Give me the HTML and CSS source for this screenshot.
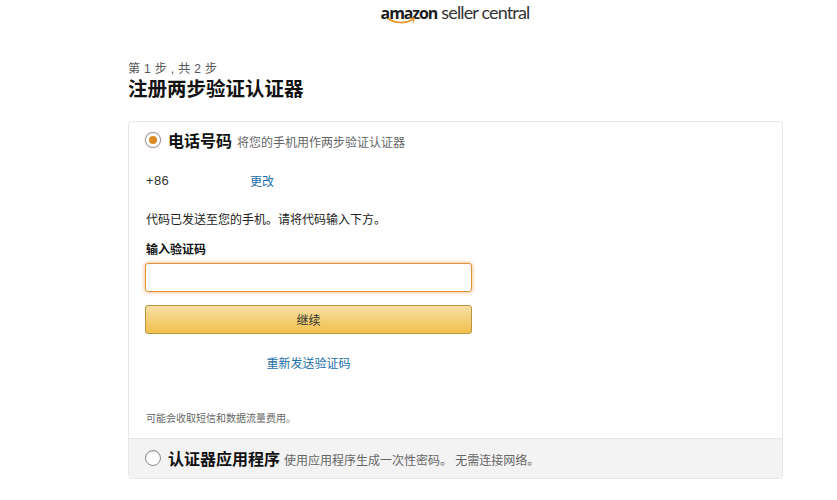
FILE: index.html
```html
<!DOCTYPE html>
<html lang="zh-CN">
<head>
<meta charset="utf-8">
<title>注册两步验证认证器</title>
<link rel="stylesheet" href="styles.css">
</head>
<body>
<header class="brand">
  <div class="logo">
    <span class="logo-amazon">amazon</span><span class="logo-seller">seller central</span>
    <svg class="smile" width="30" height="9" viewBox="0 0 30 9" aria-hidden="true">
      <path d="M1 1.5C8 6.5 18 7 26 2.5" fill="none" stroke="#e8962a" stroke-width="1.6"/>
      <path d="M23 1.2L27.5 1.4L26 5.5" fill="none" stroke="#e8962a" stroke-width="1.2"/>
    </svg>
  </div>
</header>
<main class="page">
  <p class="step">第 1 步 , 共 2 步</p>
  <h1 class="title">注册两步验证认证器</h1>
  <div class="card">
    <section class="panel">
      <div class="option">
        <span class="radio radio-on"></span>
        <span class="option-name">电话号码</span>
        <span class="option-desc">将您的手机用作两步验证认证器</span>
      </div>
      <div class="phone-row">
        <span class="phone">+86</span>
        <a class="link" href="#">更改</a>
      </div>
      <p class="notice">代码已发送至您的手机。请将代码输入下方。</p>
      <label class="label" for="code">输入验证码</label>
      <input class="input" id="code" type="text">
      <button class="button" type="button">继续</button>
      <div class="resend"><a class="link" href="#">重新发送验证码</a></div>
      <p class="fine">可能会收取短信和数据流量费用。</p>
    </section>
    <section class="panel-alt">
      <div class="option">
        <span class="radio"></span>
        <span class="option-name">认证器应用程序</span>
        <span class="option-desc">使用应用程序生成一次性密码。 无需连接网络。</span>
      </div>
    </section>
  </div>
</main>
</body>
</html>
```
FILE: styles.css
```css
* { box-sizing: border-box; }
html, body { margin: 0; padding: 0; background: #fff; }
body {
  height: 500px;
  overflow: hidden;
  font-family: "Liberation Sans", "Noto Sans CJK SC", sans-serif;
  color: #111;
  font-size: 12px;
}
.brand { height: 59px; display: flex; justify-content: center; padding-left: 73px; }
.logo { position: relative; height: 26px; display: flex; align-items: baseline; white-space: nowrap; }
.logo-amazon { font-family: "Open Sans", sans-serif; font-weight: 700; font-size: 16px; letter-spacing: -1.1px; color: #1a1a1a; line-height: 24px; }
.logo-seller { font-family: "Lato", sans-serif; font-size: 18px; letter-spacing: -0.85px; color: #333; margin-left: 4px; line-height: 24px; }
.smile { position: absolute; left: 6px; top: 17px; }
.page { width: 655px; margin-left: 128px; }
.step { margin: 0; font-size: 12px; line-height: 20px; color: #555; letter-spacing: 0.35px; }
.title { margin: 0; font-size: 19.5px; line-height: 20px; font-weight: 700; color: #111; }
.card {
  margin-top: 22px;
  height: 358px;
  border: 1px solid #e7e7e7;
  border-radius: 4px;
  display: flex;
  flex-direction: column;
  overflow: hidden;
}
.panel { flex: 1; padding: 7px 17px 0; }
.panel-alt { height: 40px; padding: 8px 15px 0 17px; background: #f3f3f3; border-top: 1px solid #e7e7e7; }
.option { display: flex; align-items: center; height: 22px; }
.radio {
  width: 16px; height: 16px; border-radius: 50%;
  border: 1px solid #8a8a8a; background: #fff;
  margin-right: 7px; flex: none; margin-left: -1px;
  box-shadow: inset 0 1px 2px rgba(0,0,0,.12);
}
.radio-on { display: flex; align-items: center; justify-content: center; border-color: #8f95a8; box-shadow: 0 0 2px rgba(228,121,17,.4); }
.radio-on::before { content: ""; width: 8px; height: 8px; border-radius: 50%; background: #dd8a24; }
.option-name { font-size: 16px; font-weight: 700; color: #111; margin-right: 5px; }
.option-desc { font-size: 12px; color: #666; margin-top: 2px; margin-right: -40px; white-space: nowrap; }
.panel-alt .option-desc { margin-left: -1px; }
.phone-row { display: flex; align-items: center; height: 20px; margin-top: 19px; }
.phone { font-size: 13px; color: #333; width: 104px; letter-spacing: .4px; }
.link { color: #1a6fa8; text-decoration: none; font-size: 12px; }
.notice { margin: 21px 0 0; line-height: 18px; color: #222; font-size: 12px; }
.label { display: block; margin-top: 12px; line-height: 18px; font-weight: 700; color: #111; font-size: 12px; }
.input {
  display: block; width: 327px; height: 29px; margin-top: 4px; margin-left: -1px;
  border: 1px solid #e0913a; border-radius: 3px; background: #fff;
  box-shadow: 0 0 4px rgba(228,121,17,.6); outline: none; padding: 0 6px;
}
.button {
  display: block; width: 327px; height: 29px; margin-top: 13px; margin-left: -1px; padding: 0;
  border: 1px solid #b8953f; border-radius: 3px;
  background: linear-gradient(#f7dfa5, #f0c14b);
  font: 12px "Liberation Sans", "Noto Sans CJK SC", sans-serif; color: #333;
}
.resend { width: 325px; text-align: center; margin-top: 21px; line-height: 18px; }
.fine { margin: 38px 0 0; font-size: 10px; line-height: 16px; color: #666; }
```
